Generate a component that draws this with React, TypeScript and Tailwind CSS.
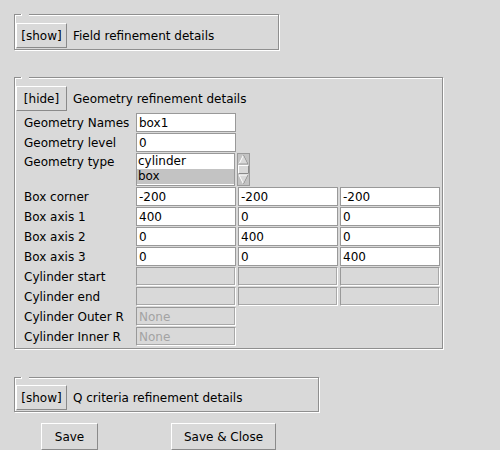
import React from 'react';

const font = { fontFamily: '"DejaVu Sans", Verdana, sans-serif' };

// Tk groove frame, with the little gap left by the empty label
function Frame({ className, children }: { className: string; children: React.ReactNode }) {
  return (
    <div className={`relative border border-[#8f8f8f] shadow-[inset_1px_1px_0_#fff,1px_1px_0_#fff] ${className}`}>
      <span className="absolute -top-[1px] left-[6px] w-[8px] h-[2px] bg-[#d9d9d9] border-l border-white" />
      {children}
    </div>
  );
}

function TkButton({ label, className = '' }: { label: string; className?: string }) {
  return (
    <div className={`flex items-center justify-center bg-[#d9d9d9] border border-t-white border-l-white border-b-[#8a8a8a] border-r-[#8a8a8a] text-[12px] text-black ${className}`}>
      {label}
    </div>
  );
}

function Entry({ value = '', disabled = false, w = 'w-[100px]' }: { value?: string; disabled?: boolean; w?: string }) {
  return (
    <div className={`${w} h-[19px] flex items-center pl-[2px] border border-[#999] text-[12px] leading-none ${disabled ? 'bg-[#d9d9d9] text-[#a3a3a3] border-b-white border-r-white shadow-[inset_0_-1px_0_#a8a8a8,inset_-1px_0_0_#a8a8a8]' : 'bg-white text-black'}`}>
      {value}
    </div>
  );
}

function Row({ label, children }: { label: string; children: React.ReactNode }) {
  return (
    <div className="flex items-center h-[19px]">
      <div className="w-[112px] text-[12px] text-black whitespace-nowrap">{label}</div>
      <div className="flex gap-[2px]">{children}</div>
    </div>
  );
}

function ScrollArrows() {
  return (
    <svg width="13" height="33" viewBox="0 0 13 33" className="ml-[2px]">
      <rect x="0" y="0" width="13" height="33" fill="#c3c3c3" />
      <rect x="0.5" y="0.5" width="12" height="32" fill="none" stroke="#9a9a9a" />
      <polygon points="6.5,2 11,11 2,11" fill="#d9d9d9" stroke="#fff" />
      <path d="M2 11 H11 L6.5 2" fill="none" stroke="#8a8a8a" />
      <rect x="1.5" y="12.5" width="10" height="8" fill="#d9d9d9" stroke="#fff" />
      <path d="M1.5 20.5 H11.5 V12.5" fill="none" stroke="#8a8a8a" />
      <polygon points="2,22 11,22 6.5,31" fill="#d9d9d9" stroke="#fff" />
      <path d="M11 22 L6.5 31" fill="none" stroke="#8a8a8a" />
    </svg>
  );
}

export default function App() {
  return (
    <div style={font} className="w-[500px] h-[450px] bg-[#d9d9d9] pl-[14px] pt-[14px] overflow-hidden text-black">
      {/* Field refinement */}
      <Frame className="w-[265px] h-[36px] pt-[8px] pl-[1px]">
        <div className="flex items-center">
          <TkButton label="[show]" className="w-[51px] h-[25px]" />
          <span className="ml-[6px] text-[12px]">Field refinement details</span>
        </div>
      </Frame>

      {/* Geometry refinement */}
      <Frame className="w-[429px] mt-[27px] pt-[8px] pl-[1px] pb-[2px]">
        <div className="flex items-center">
          <TkButton label="[hide]" className="w-[51px] h-[25px]" />
          <span className="ml-[6px] text-[12px]">Geometry refinement details</span>
        </div>
        <div className="pl-[8px] mt-[2px] flex flex-col gap-[1px]">
          <Row label="Geometry Names"><Entry value="box1" /></Row>
          <Row label="Geometry level"><Entry value="0" /></Row>
          <div className="flex items-start h-[33px]">
            <div className="w-[112px] h-[16px] mt-[1px] flex items-center text-[12px]">Geometry type</div>
            <div className="w-[99px] h-[33px] bg-white border border-[#999] text-[12px] leading-[15px] flex flex-col">
              <div className="pl-[1px] h-[15px]">cylinder</div>
              <div className="pl-[1px] h-[15px] bg-[#c3c3c3]">box</div>
            </div>
            <ScrollArrows />
          </div>
          <Row label="Box corner"><Entry value="-200" /><Entry value="-200" /><Entry value="-200" /></Row>
          <Row label="Box axis 1"><Entry value="400" /><Entry value="0" /><Entry value="0" /></Row>
          <Row label="Box axis 2"><Entry value="0" /><Entry value="400" /><Entry value="0" /></Row>
          <Row label="Box axis 3"><Entry value="0" /><Entry value="0" /><Entry value="400" /></Row>
          <Row label="Cylinder start"><Entry disabled /><Entry disabled /><Entry disabled /></Row>
          <Row label="Cylinder end"><Entry disabled /><Entry disabled /><Entry disabled /></Row>
          <Row label="Cylinder Outer R"><Entry value="None" disabled /></Row>
          <Row label="Cylinder Inner R"><Entry value="None" disabled /></Row>
        </div>
      </Frame>

      {/* Q criteria */}
      <Frame className="w-[305px] h-[35px] mt-[28px] pt-[7px] pl-[1px]">
        <div className="flex items-center">
          <TkButton label="[show]" className="w-[51px] h-[25px]" />
          <span className="ml-[6px] text-[12px]">Q criteria refinement details</span>
        </div>
      </Frame>

      <div className="flex mt-[11px] ml-[27px] gap-[73px]">
        <TkButton label="Save" className="w-[57px] h-[27px]" />
        <TkButton label="Save & Close" className="w-[105px] h-[27px]" />
      </div>
    </div>
  );
}
